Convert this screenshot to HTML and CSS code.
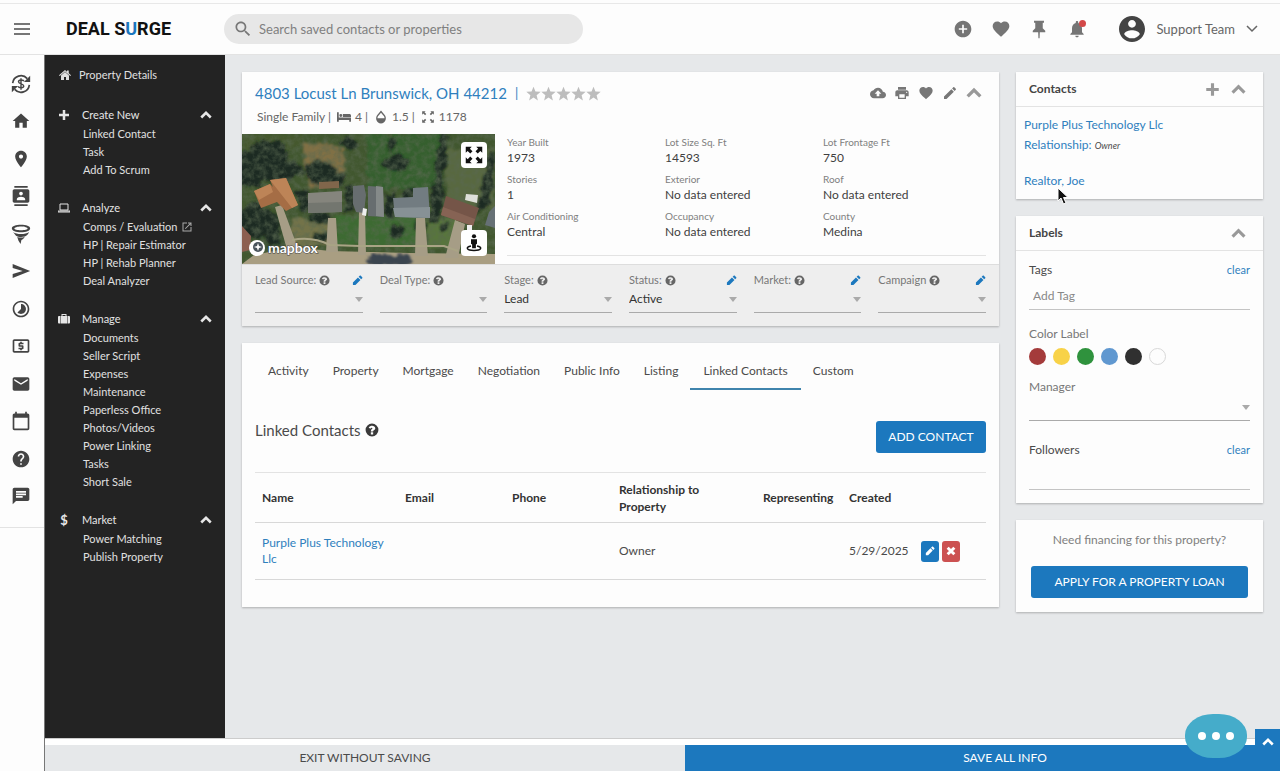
FILE: index.html
```html
<!DOCTYPE html>
<html lang="en">
<head>
    <meta charset="UTF-8">
    <meta name="viewport" content="width=device-width, initial-scale=1.0">
    <title>Deal Surge - Property Details</title>
    <link rel="stylesheet" href="styles.css">
</head>
<body>
    <!-- Shared icons -->
    <svg class="sprite" aria-hidden="true">
        <symbol id="heart" viewBox="0 0 24 24"><path d="M12 21.35l-1.45-1.32C5.4 15.36 2 12.28 2 8.5 2 5.42 4.42 3 7.5 3c1.74 0 3.41.81 4.5 2.09C13.09 3.81 14.76 3 16.5 3 19.58 3 22 5.42 22 8.5c0 3.78-3.4 6.86-8.55 11.54L12 21.35z"/></symbol>
        <symbol id="help" viewBox="0 0 24 24"><path d="M12 1a11 11 0 1 0 0 22 11 11 0 0 0 0-22zm2 18.500h-4v-3.500h4v3.500zm2.800-8.500c-.8 1.100-2.800 1.600-2.800 3.200v.3h-4v-.8c0-2.600 2.800-3 2.800-4.500 0-1.600-2.600-1.500-3.800.5L6.300 7.700C9.500 2.800 17.600 4.200 17.600 9c0 .8-.3 1.500-.8 2z"/></symbol>
        <symbol id="pencil" viewBox="0 0 24 24"><path d="M2 16.500V22h5.500L18.500 11 13 5.500 2 16.500zM22.300 7.200c.8-.8.8-1.700 0-2.500l-3-3c-.8-.8-1.700-.8-2.500 0L14.500 4 20 9.500l2.300-2.300z"/></symbol>
        <symbol id="chevron" viewBox="0 0 24 24"><path d="M2.500 17L12 7.500l9.500 9.500" fill="none" stroke="currentColor" stroke-width="5"/></symbol>
        <symbol id="plus" viewBox="0 0 24 24"><path d="M9.500 2h5v7.500H22v5h-7.500V22h-5v-7.500H2v-5h7.500z"/></symbol>
        <symbol id="star" viewBox="0 0 24 24"><path d="M12 18.300L19 23l-2-8.300 6.500-5.400-8.400-.6L12 1 8.900 8.700.5 9.300 7 14.700 5 23z"/></symbol>
    </svg>

    <header class="topbar">
        <button class="menu-btn" aria-label="Menu">
            <svg viewBox="0 0 16 12"><path d="M0 1h16M0 6h16M0 11h16" stroke="currentColor" stroke-width="1.500"/></svg>
        </button>
        <a class="logo" href="#">DEAL S<span>U</span>RGE</a>
        <label class="search">
            <svg viewBox="0 0 24 24"><path d="M15.500 14h-.79l-.28-.27C15.410 12.590 16 11.110 16 9.500 16 5.910 13.090 3 9.500 3S3 5.910 3 9.500 5.910 16 9.500 16c1.610 0 3.090-.59 4.230-1.570l.27.28v.79l5 4.990L20.490 19l-4.990-5zm-6 0C7.010 14 5 11.990 5 9.500S7.010 5 9.500 5 14 7.010 14 9.500 11.990 14 9.500 14z"/></svg>
            <input type="text" placeholder="Search saved contacts or properties" aria-label="Search">
        </label>
        <div class="top-actions">
            <button aria-label="Add"><svg viewBox="0 0 24 24"><path d="M12 2C6.480 2 2 6.480 2 12s4.480 10 10 10 10-4.480 10-10S17.520 2 12 2zm5 11h-4v4h-2v-4H7v-2h4V7h2v4h4v2z"/></svg></button>
            <button aria-label="Favorites"><svg><use href="#heart"/></svg></button>
            <button aria-label="Pinned"><svg viewBox="0 0 24 24"><path d="M6 2h12v2.500h-1.500V11l3 3v2h-6.500l-.3 7h-1.400l-.3-7H4.500v-2l3-3V4.500H6z"/></svg></button>
            <button aria-label="Notifications"><svg viewBox="0 0 24 24"><path d="M12 22c1.100 0 2-.9 2-2h-4c0 1.100.89 2 2 2zm6-6v-5c0-3.070-1.640-5.640-4.500-6.320V4c0-.83-.67-1.500-1.500-1.500s-1.500.67-1.500 1.500v.68C7.630 5.360 6 7.920 6 11v5l-2 2v1h16v-1l-2-2z"/></svg><span class="dot"></span></button>
        </div>
        <button class="account">
            <svg class="avatar" viewBox="2 2 20 20"><path d="M12 2C6.480 2 2 6.480 2 12s4.480 10 10 10 10-4.480 10-10S17.520 2 12 2zm0 3c1.660 0 3 1.340 3 3s-1.340 3-3 3-3-1.340-3-3 1.340-3 3-3zm0 14.200c-2.500 0-4.710-1.280-6-3.220.03-1.990 4-3.080 6-3.080 1.990 0 5.970 1.090 6 3.080-1.290 1.940-3.500 3.220-6 3.220z"/></svg>
            Support Team
            <svg class="caret" viewBox="0 0 12 12"><path d="M1 3l5 5 5-5" fill="none" stroke="currentColor" stroke-width="1.500"/></svg>
        </button>
    </header>

    <div class="shell">
        <nav class="rail">
            <ul>
                <li><a href="#" aria-label="Deals"><svg viewBox="0 0 24 24"><path d="M2 11A10 10 0 0 1 19.500 5.500M22 13A10 10 0 0 1 4.500 18.500" fill="none" stroke="currentColor" stroke-width="2"/><path d="M23 2v7.500h-7.500zM1 22v-7.500h7.500z"/><path d="M15.500 8.500c-1-1.600-6.500-2-6.500.8 0 3 6.300 2 6.300 5 0 2.900-5.800 2.700-6.800.6M12 5v14" fill="none" stroke="currentColor" stroke-width="1.700"/></svg></a></li>
                <li><a href="#" aria-label="Home"><svg viewBox="0 0 24 24"><path d="M10 20v-6h4v6h5v-8h3L12 3 2 12h3v8z"/></svg></a></li>
                <li><a href="#" aria-label="Map"><svg viewBox="0 0 24 24"><path d="M12 2C8.130 2 5 5.130 5 9c0 5.250 7 13 7 13s7-7.750 7-13c0-3.870-3.130-7-7-7zm0 9.500c-1.380 0-2.500-1.120-2.500-2.500s1.120-2.500 2.500-2.500 2.500 1.120 2.500 2.500-1.120 2.500-2.500 2.500z"/></svg></a></li>
                <li><a href="#" aria-label="Contacts"><svg viewBox="0 0 24 24"><path d="M20 0H4v2h16V0zM4 24h16v-2H4v2zM20 4H4c-1.100 0-2 .9-2 2v12c0 1.100.9 2 2 2h16c1.100 0 2-.9 2-2V6c0-1.100-.9-2-2-2zm-8 2.750c1.240 0 2.250 1.010 2.250 2.250s-1.010 2.250-2.250 2.250S9.750 10.240 9.750 9 10.760 6.750 12 6.750zM17 17H7v-1.500c0-1.670 3.330-2.500 5-2.500s5 .83 5 2.500V17z"/></svg></a></li>
                <li><a href="#" aria-label="Funnel"><svg viewBox="0 0 24 24"><path d="M12 1c6 0 11 1.600 11 4.300S18 10 12 10 1 8 1 5.300 6 1 12 1zm0 2C7.500 3 4 4.200 4 5.400s3.500 2.100 8 2.100 8-.9 8-2.100S16.500 3 12 3z" fill-rule="evenodd"/><path d="M2.500 9.500c4 3.200 15 3.200 19 0-.5 2.500-2.500 4.500-5 5.500-4 1-8.500.5-10.500-1zM7.500 15.500c3 1.300 6.500 1 9-.3-.7 1.800-2.500 3.300-4 4l-1 4.800-2.500-4z"/></svg></a></li>
                <li><a href="#" aria-label="Campaigns"><svg viewBox="0 0 24 24"><path d="M2.010 20.500L23 12 2.010 3.500 2 8.500l12 3.500-12 3.500z"/></svg></a></li>
                <li><a href="#" aria-label="Timeline"><svg viewBox="0 0 24 24"><path d="M16.240 7.760C15.070 6.590 13.540 6 12 6v6l-4.240 4.240c2.340 2.340 6.140 2.340 8.490 0 2.340-2.340 2.340-6.140-.01-8.480zM12 2C6.480 2 2 6.480 2 12s4.480 10 10 10 10-4.480 10-10S17.520 2 12 2zm0 18c-4.420 0-8-3.580-8-8s3.580-8 8-8 8 3.580 8 8-3.580 8-8 8z"/></svg></a></li>
                <li><a href="#" aria-label="Funding"><svg viewBox="0 0 24 24"><path d="M11 17h2v-1h1c.55 0 1-.45 1-1v-3c0-.55-.45-1-1-1h-3v-1h4V8h-2V7h-2v1h-1c-.55 0-1 .45-1 1v3c0 .55.45 1 1 1h3v1H9v2h2v1zm9-13H4c-1.110 0-1.990.89-1.990 2L2 18c0 1.110.89 2 2 2h16c1.110 0 2-.89 2-2V6c0-1.110-.89-2-2-2zm0 14H4V6h16v12z"/></svg></a></li>
                <li><a href="#" aria-label="Mail"><svg viewBox="0 0 24 24"><path d="M20 4H4c-1.100 0-1.990.9-1.990 2L2 18c0 1.100.9 2 2 2h16c1.100 0 2-.9 2-2V6c0-1.100-.9-2-2-2zm0 4l-8 5-8-5V6l8 5 8-5v2z"/></svg></a></li>
                <li><a href="#" aria-label="Calendar"><svg viewBox="0 0 24 24"><path d="M20 3h-1V1h-2v2H7V1H5v2H4c-1.100 0-2 .9-2 2v16c0 1.100.9 2 2 2h16c1.100 0 2-.9 2-2V5c0-1.100-.9-2-2-2zm0 18H4V8h16v13z"/></svg></a></li>
                <li><a href="#" aria-label="Help"><svg viewBox="0 0 24 24"><path d="M12 2C6.480 2 2 6.480 2 12s4.480 10 10 10 10-4.480 10-10S17.520 2 12 2zm1 17h-2v-2h2v2zm2.070-7.750l-.9.92C13.450 12.900 13 13.500 13 15h-2v-.5c0-1.100.45-2.100 1.170-2.830l1.240-1.260c.37-.36.59-.86.59-1.410 0-1.100-.9-2-2-2s-2 .9-2 2H8c0-2.210 1.790-4 4-4s4 1.790 4 4c0 .88-.36 1.680-.93 2.250z"/></svg></a></li>
                <li><a href="#" aria-label="Chat"><svg viewBox="0 0 24 24"><path d="M20 2H4c-1.100 0-1.990.9-1.990 2L2 22l4-4h14c1.100 0 2-.9 2-2V4c0-1.100-.9-2-2-2zM6 9h12v2H6V9zm8 5H6v-2h8v2zm4-6H6V6h12v2z"/></svg></a></li>
            </ul>
        </nav>

        <div class="workspace">
            <div class="panes">
                <nav class="sidebar">
                    <a class="side-title" href="#"><svg viewBox="0 0 24 24"><path d="M12 6l8 7v9h-6v-6h-4v6H4v-9zM12 2l4 3.500V3h3.500v5.500L24 12.500l-1.500 1.500L12 5 1.500 14 0 12.500z"/></svg>Property Details</a>

                    <section>
                        <button class="side-head"><svg><use href="#plus"/></svg>Create New<svg class="fold"><use href="#chevron"/></svg></button>
                        <a href="#">Linked Contact</a>
                        <a href="#">Task</a>
                        <a href="#">Add To Scrum</a>
                    </section>
                    <section>
                        <button class="side-head"><svg viewBox="0 0 24 24"><path d="M4 4h16v12H4zM0 18h24v2H0z" fill="none" stroke="currentColor" stroke-width="2"/></svg>Analyze<svg class="fold"><use href="#chevron"/></svg></button>
                        <a href="#">Comps / Evaluation <svg class="external" viewBox="0 0 24 24"><path d="M19 19H5V5h7V3H3v18h18v-9h-2v7zM14 3v2h3.590l-9.830 9.830 1.410 1.410L19 6.410V10h2V3h-7z"/></svg></a>
                        <a href="#">HP | Repair Estimator</a>
                        <a href="#">HP | Rehab Planner</a>
                        <a href="#">Deal Analyzer</a>
                    </section>
                    <section>
                        <button class="side-head"><svg viewBox="0 0 24 24"><path d="M7 6V2h10v4h1.500v15h-13V6zm2 0h6V4H9zM0 8c0-1 1-2 2-2h2.500v15H2c-1 0-2-1-2-2zM24 8c0-1-1-2-2-2h-2.500v15H22c1 0 2-1 2-2z" fill-rule="evenodd"/></svg>Manage<svg class="fold"><use href="#chevron"/></svg></button>
                        <a href="#">Documents</a>
                        <a href="#">Seller Script</a>
                        <a href="#">Expenses</a>
                        <a href="#">Maintenance</a>
                        <a href="#">Paperless Office</a>
                        <a href="#">Photos/Videos</a>
                        <a href="#">Power Linking</a>
                        <a href="#">Tasks</a>
                        <a href="#">Short Sale</a>
                    </section>
                    <section>
                        <button class="side-head"><b>$</b>Market<svg class="fold"><use href="#chevron"/></svg></button>
                        <a href="#">Power Matching</a>
                        <a href="#">Publish Property</a>
                    </section>
                </nav>

                <main class="content">
                    <div class="primary">
                        <article class="card">
                            <div class="property-head">
                                <h1>
                                    <a href="#">4803 Locust Ln Brunswick, OH 44212</a>
                                    <span class="divider">|</span>
                                    <span class="stars"><svg><use href="#star"/></svg><svg><use href="#star"/></svg><svg><use href="#star"/></svg><svg><use href="#star"/></svg><svg><use href="#star"/></svg></span>
                                </h1>
                                <div class="property-tools">
                                    <button aria-label="Upload"><svg viewBox="0 0 24 24"><path d="M19.350 10.040C18.670 6.590 15.640 4 12 4 9.110 4 6.600 5.640 5.350 8.040 2.340 8.360 0 10.910 0 14c0 3.310 2.690 6 6 6h13c2.760 0 5-2.240 5-5 0-2.640-2.050-4.780-4.650-4.960zM14 13v4h-4v-4H7l5-5 5 5h-3z"/></svg></button>
                                    <button aria-label="Print"><svg viewBox="0 0 24 24"><path d="M19 8H5c-1.660 0-3 1.340-3 3v6h4v4h12v-4h4v-6c0-1.660-1.340-3-3-3zm-3 11H8v-5h8v5zm3-7c-.55 0-1-.45-1-1s.45-1 1-1 1 .45 1 1-.45 1-1 1zm-1-9H6v4h12V3z"/></svg></button>
                                    <button aria-label="Favorite"><svg><use href="#heart"/></svg></button>
                                    <button aria-label="Edit"><svg viewBox="0 0 24 24"><path d="M3 17.250V21h3.750L17.810 9.940l-3.750-3.750L3 17.250zM20.710 7.040c.39-.39.39-1.020 0-1.410l-2.340-2.340c-.39-.39-1.020-.39-1.410 0l-1.830 1.830 3.750 3.750 1.830-1.830z"/></svg></button>
                                    <button class="collapse" aria-label="Collapse"><svg><use href="#chevron"/></svg></button>
                                </div>
                            </div>
                            <p class="property-meta">
                                <span>Single Family |</span>
                                <span><svg viewBox="0 0 24 24"><path d="M0 4h3v9h21v7h-3v-3H3v3H0zM6.500 7a2.500 2.500 0 1 1 0 5 2.500 2.500 0 0 1 0-5zM10 7h11c2 0 3 1 3 3v2H10z"/></svg>4 |</span>
                                <span><svg viewBox="0 0 24 24"><path d="M12 1l6 7c5 5.500 1.500 15-6 15S1 13.500 6 8zM12 4.500L8 9.500c-1.500 1.500-2 2.500-2 4.500h12c0-2-.5-3-2-4.500z" fill-rule="evenodd"/></svg>1.5 |</span>
                                <span><svg viewBox="0 0 24 24"><path d="M2 2h6L6 4l3 3-2 2-3-3-2 2zM22 2v6l-2-2-3 3-2-2 3-3-2-2zM2 22v-6l2 2 3-3 2 2-3 3 2 2zM22 22h-6l2-2-3-3 2-2 3 3 2-2z"/></svg>1178</span>
                            </p>

                            <div class="overview">
                                <div class="map">
                                    <svg viewBox="0 0 253 130" preserveAspectRatio="xMidYMid slice" aria-label="Satellite view">
                                        <defs>
                                            <filter id="rough" x="-5%" y="-5%" width="110%" height="110%">
                                                <feTurbulence type="fractalNoise" baseFrequency=".12" numOctaves="3" seed="4"/>
                                                <feDisplacementMap in="SourceGraphic" scale="10" xChannelSelector="R" yChannelSelector="G"/>
                                                <feGaussianBlur stdDeviation=".8"/>
                                            </filter>
                                            <filter id="grain">
                                                <feTurbulence type="fractalNoise" baseFrequency=".16" numOctaves="4" seed="8"/>
                                                <feColorMatrix values="0 0 0 0 .1  0 0 0 0 .14  0 0 0 0 .08  1.4 0 0 0 -.5"/>
                                            </filter>
                                        </defs>
                                        <rect width="253" height="130" fill="#41572f"/>
                                        <g filter="url(#rough)">
                                            <path d="M125 0h75v55h-75z" fill="#355f2d"/>
                                            <path d="M203 15h50v60h-48z" fill="#586840"/>
                                            <path d="M60 10q25-6 42 8v30l-35 6z" fill="#806f45"/>
                                            <path d="M0 0h62v12L30 22 0 20z" fill="#44582f"/>
                                            <path d="M94 82h82v30H94z" fill="#3e6b31"/>
                                            <path d="M50 84h37v28H50z" fill="#73734a"/>
                                            <path d="M186 84h30v30h-30z" fill="#58753c"/>
                                            <path d="M0 75l36 5 12 32-30 5z" fill="#38502f"/>
                                        </g>
                                        <g filter="url(#rough)" fill="#1c2a23">
                                            <ellipse cx="26" cy="20" rx="19" ry="14"/>
                                            <ellipse cx="8" cy="36" rx="16" ry="18"/>
                                            <ellipse cx="35" cy="36" rx="25" ry="11"/>
                                            <ellipse cx="78" cy="38" rx="15" ry="12"/>
                                            <ellipse cx="92" cy="45" rx="12" ry="9"/>
                                            <ellipse cx="107" cy="9" rx="8" ry="6"/>
                                            <ellipse cx="154" cy="29" rx="13" ry="8"/>
                                            <ellipse cx="150" cy="9" rx="6" ry="7"/>
                                            <ellipse cx="12" cy="88" rx="18" ry="18"/>
                                            <ellipse cx="30" cy="95" rx="8" ry="16"/>
                                            <ellipse cx="80" cy="103" rx="10" ry="5"/>
                                            <ellipse cx="78" cy="83" rx="10" ry="6"/>
                                            <ellipse cx="155" cy="97" rx="8" ry="6"/>
                                            <ellipse cx="178" cy="92" rx="6" ry="7"/>
                                            <ellipse cx="203" cy="94" rx="5" ry="5"/>
                                            <path d="M199 0h7l-7 58h-9zM247 18h7l-7 52-12 12 5-30zM54 56h13v21H58zM102 52h10v27h-8zM143 60h10v24h-10zM163 52h9v12h-9zM190 58h11l-4 30h-9z"/>
                                        </g>
                                        <rect width="253" height="130" filter="url(#grain)"/>
                                        <path d="M0 130l12-9 40-8 36 4 80 2 85 1v10z" fill="#a99e82"/>
                                        <path d="M33 73l7-2 14 38 8 8-16 2zM86 84h8l2 34H84zM117 77h6l1 44h-8zM174 84h9l3 38h-13zM213 86l10 4-7 34h-13z" fill="#a69d86"/>
                                        <path d="M50 106q20-4 38 5l30 1h84l14 5" fill="none" stroke="#a9a485" stroke-width="2"/>
                                        <path d="M12 57l16-7 3 3-3-7 16-2 12 27-12 6-9-9-16 6z" fill="#a56d45"/>
                                        <path d="M28 46l16-2 12 27-6 3zM12 57l16-7 3 8-14 8z" fill="#bd8457"/>
                                        <path d="M66 59l34-2v21l-34 1z" fill="#85857d"/><path d="M66 69l34-1v10l-34 1z" fill="#73766f"/>
                                        <path d="M77 48l20-1v7l-20 1z" fill="#80664b"/>
                                        <path d="M111 52l11-1 2 10-2 18-8-1-3-8zM126 52l15 1 1 30-16-1z" fill="#676d6f"/><path d="M134 52l7 1 1 30-8-1z" fill="#858a89"/>
                                        <path d="M151 64l20-1V54l15-1 2 31-35-1z" fill="#727c81"/><path d="M151 74l37-1v11l-35-1z" fill="#879195"/>
                                        <path d="M204 62l33 12-6 18-32-11z" fill="#755548"/><path d="M201 73l32 12-2 7-32-11z" fill="#866354"/>
                                        <path d="M224 60l12 1-1 8-12-3z" fill="#dedfd9"/>
                                        <path d="M0 92l9 10-1 14-8 2z" fill="#8c5f50"/>
                                        <path d="M247 78l6-6v22l-10-3z" fill="#667075"/>
                                        <path d="M121 74l4 1-1 7-4-1zM225 91h5v5h-5z" fill="#eee"/>
                                        <ellipse cx="147" cy="126" rx="23" ry="6" fill="#3b4550" filter="url(#rough)"/>
                                        <circle cx="15" cy="114" r="8" fill="#fff"/>
                                        <circle cx="16" cy="113" r="5" fill="#48525a"/>
                                        <path d="M16 109l1 3 3 1-3 1-1 3-1-3-3-1 3-1z" fill="#fff"/>
                                        <text x="26" y="119">mapbox</text>
                                    </svg>
                                    <button class="map-btn expand" aria-label="Expand map"><svg viewBox="0 0 24 24"><path d="M1 1h8L6.500 3.500 10 7l-3 3-3.500-3.500L1 9zM23 1v8l-2.500-2.500L17 10l-3-3 3.500-3.500L15 1zM1 23v-8l2.500 2.500L7 14l3 3-3.500 3.500L9 23zM23 23h-8l2.500-2.500L14 17l3-3 3.500 3.500L23 15z"/></svg></button>
                                    <button class="map-btn street" aria-label="Street view"><svg viewBox="0 0 24 24"><circle cx="12" cy="3" r="2.800"/><path d="M8 7h8v6l-1.500 1v5h-5v-5L8 13z"/><path d="M8 16c-8 1.500-6 6 4 6s12-4.500 4-6" fill="none" stroke="currentColor" stroke-width="2"/></svg></button>
                                </div>
                                <dl class="facts">
                                    <div><dt>Year Built</dt><dd>1973</dd></div>
                                    <div><dt>Lot Size Sq. Ft</dt><dd>14593</dd></div>
                                    <div><dt>Lot Frontage Ft</dt><dd>750</dd></div>
                                    <div><dt>Stories</dt><dd>1</dd></div>
                                    <div><dt>Exterior</dt><dd>No data entered</dd></div>
                                    <div><dt>Roof</dt><dd>No data entered</dd></div>
                                    <div><dt>Air Conditioning</dt><dd>Central</dd></div>
                                    <div><dt>Occupancy</dt><dd>No data entered</dd></div>
                                    <div><dt>County</dt><dd>Medina</dd></div>
                                </dl>
                            </div>

                            <div class="status-bar">
                                <div class="field">
                                    <div class="field-head"><label for="lead-source">Lead Source:</label><svg><use href="#help"/></svg><button aria-label="Edit lead source"><svg><use href="#pencil"/></svg></button></div>
                                    <div class="select"><select id="lead-source"><option></option></select></div>
                                </div>
                                <div class="field">
                                    <div class="field-head"><label for="deal-type">Deal Type:</label><svg><use href="#help"/></svg></div>
                                    <div class="select"><select id="deal-type"><option></option></select></div>
                                </div>
                                <div class="field">
                                    <div class="field-head"><label for="stage">Stage:</label><svg><use href="#help"/></svg></div>
                                    <div class="select"><select id="stage"><option>Lead</option></select></div>
                                </div>
                                <div class="field">
                                    <div class="field-head"><label for="status">Status:</label><svg><use href="#help"/></svg><button aria-label="Edit status"><svg><use href="#pencil"/></svg></button></div>
                                    <div class="select"><select id="status"><option>Active</option></select></div>
                                </div>
                                <div class="field">
                                    <div class="field-head"><label for="market">Market:</label><svg><use href="#help"/></svg><button aria-label="Edit market"><svg><use href="#pencil"/></svg></button></div>
                                    <div class="select"><select id="market"><option></option></select></div>
                                </div>
                                <div class="field">
                                    <div class="field-head"><label for="campaign">Campaign</label><svg><use href="#help"/></svg><button aria-label="Edit campaign"><svg><use href="#pencil"/></svg></button></div>
                                    <div class="select"><select id="campaign"><option></option></select></div>
                                </div>
                            </div>
                        </article>

                        <article class="card details">
                            <nav class="tabs">
                                <a href="#">Activity</a>
                                <a href="#">Property</a>
                                <a href="#">Mortgage</a>
                                <a href="#">Negotiation</a>
                                <a href="#">Public Info</a>
                                <a href="#">Listing</a>
                                <a href="#" class="active">Linked Contacts</a>
                                <a href="#">Custom</a>
                            </nav>
                            <div class="details-head">
                                <h2>Linked Contacts <svg><use href="#help"/></svg></h2>
                                <button class="btn">ADD CONTACT</button>
                            </div>
                            <table>
                                <colgroup>
                                    <col>
                                    <col class="col-medium">
                                    <col class="col-medium">
                                    <col class="col-wide">
                                    <col class="col-small">
                                    <col class="col-date">
                                    <col class="col-date">
                                </colgroup>
                                <thead>
                                    <tr>
                                        <th>Name</th>
                                        <th>Email</th>
                                        <th>Phone</th>
                                        <th>Relationship to<br>Property</th>
                                        <th>Representing</th>
                                        <th>Created</th>
                                        <th></th>
                                    </tr>
                                </thead>
                                <tbody>
                                    <tr>
                                        <td><a href="#">Purple Plus Technology Llc</a></td>
                                        <td></td>
                                        <td></td>
                                        <td>Owner</td>
                                        <td></td>
                                        <td>5/29/2025</td>
                                        <td>
                                            <div class="row-actions">
                                                <button class="edit" aria-label="Edit"><svg><use href="#pencil"/></svg></button>
                                                <button class="remove" aria-label="Remove"><svg viewBox="0 0 24 24"><path d="M4 4l16 16M20 4L4 20" stroke="currentColor" stroke-width="7"/></svg></button>
                                            </div>
                                        </td>
                                    </tr>
                                </tbody>
                            </table>
                        </article>
                    </div>

                    <aside class="secondary">
                        <section class="card contacts">
                            <div class="card-head">
                                <h3>Contacts</h3>
                                <button aria-label="Add contact"><svg><use href="#plus"/></svg></button>
                                <button aria-label="Collapse"><svg><use href="#chevron"/></svg></button>
                            </div>
                            <ul>
                                <li><a href="#">Purple Plus Technology Llc</a></li>
                                <li><a href="#">Relationship:</a> <em>Owner</em></li>
                                <li><a href="#">Realtor, Joe</a></li>
                            </ul>
                            <svg class="pointer" viewBox="0 0 12 18"><path d="M1 1v13l3-3 2.500 6 2.500-1-2.500-5.500H11z" fill="#111" stroke="#fff"/></svg>
                        </section>

                        <section class="card">
                            <div class="card-head">
                                <h3>Labels</h3>
                                <button aria-label="Collapse"><svg><use href="#chevron"/></svg></button>
                            </div>
                            <div class="labels">
                                <div class="label-row"><label for="tags">Tags</label><button>clear</button></div>
                                <input id="tags" class="line-input" type="text" placeholder="Add Tag">
                                <fieldset>
                                    <legend>Color Label</legend>
                                    <div class="swatches">
                                        <input class="red" type="radio" name="color" aria-label="Red">
                                        <input class="yellow" type="radio" name="color" aria-label="Yellow">
                                        <input class="green" type="radio" name="color" aria-label="Green">
                                        <input class="blue" type="radio" name="color" aria-label="Blue">
                                        <input class="black" type="radio" name="color" aria-label="Black">
                                        <input class="white" type="radio" name="color" aria-label="White">
                                    </div>
                                </fieldset>
                                <label class="muted" for="manager">Manager</label>
                                <div class="select"><select id="manager"><option></option></select></div>
                                <div class="label-row followers"><label for="followers">Followers</label><button>clear</button></div>
                                <input id="followers" class="line-input" type="text">
                            </div>
                        </section>

                        <section class="card financing">
                            <p>Need financing for this property?</p>
                            <button class="btn">APPLY FOR A PROPERTY LOAN</button>
                        </section>
                    </aside>
                </main>
            </div>

            <footer class="savebar">
                <button class="exit">EXIT WITHOUT SAVING</button>
                <button class="save">SAVE ALL INFO</button>
            </footer>
        </div>
    </div>

    <button class="to-top" aria-label="Back to top"><svg><use href="#chevron"/></svg></button>
    <button class="chat" aria-label="Open chat"><span></span><span></span><span></span></button>
</body>
</html>
```
FILE: styles.css
```css
* {
    box-sizing: border-box;
}
body {
    margin: 0;
    height: 100vh;
    display: flex;
    flex-direction: column;
    background-color: #fdfdfd;
    font-family: Lato, "Open Sans", sans-serif;
    font-size: 13px;
    line-height: 18px;
    color: #4a4a4a;
}
h1, h2, h3, p, ul, dl, dd, fieldset {
    margin: 0;
    padding: 0;
    font-weight: normal;
}
ul {
    list-style: none;
}
a {
    color: #2f80bd;
    text-decoration: none;
}
button, input, select {
    font: inherit;
    color: inherit;
    background: none;
    border: none;
    margin: 0;
    padding: 0;
}
button {
    cursor: pointer;
}
svg {
    display: block;
    fill: currentColor;
    flex: none;
}
.sprite {
    position: absolute;
    width: 0;
    height: 0;
}

/* Top bar */
.topbar {
    flex: none;
    display: flex;
    align-items: center;
    height: 52px;
    margin-top: 3px;
    padding: 0 22px 0 14px;
    border-top: 1px solid #e8e8e8;
    border-bottom: 1px solid #e3e3e3;
}
.menu-btn svg {
    width: 16px;
    height: 12px;
}
.logo {
    width: 158px;
    padding-left: 36px;
    font-family: Roboto, "Liberation Sans", sans-serif;
    font-size: 18px;
    font-weight: bold;
    color: #111;
    white-space: nowrap;
}
.logo span {
    color: #1c78be;
}
.search {
    display: flex;
    align-items: center;
    gap: 6px;
    flex: 0 1 359px;
    margin-left: 36px;
    height: 30px;
    padding: 0 9px;
    border-radius: 15px;
    background-color: #e7e7e7;
    color: #777;
}
.search svg {
    width: 20px;
    height: 20px;
}
.search input {
    flex: 1;
    outline: none;
}
.search input::placeholder {
    color: #808080;
    opacity: 1;
}
.top-actions {
    display: flex;
    gap: 18px;
    margin-left: auto;
    color: #757575;
}
.top-actions button {
    position: relative;
}
.top-actions svg {
    width: 20px;
    height: 20px;
}
.dot {
    position: absolute;
    top: 1px;
    right: 1px;
    width: 7px;
    height: 7px;
    border-radius: 50%;
    background-color: #d34848;
}
.account {
    display: flex;
    align-items: center;
    gap: 11px;
    margin-left: 32px;
    color: #666;
}
.avatar {
    width: 26px;
    height: 26px;
    color: #444;
}
.caret {
    width: 12px;
    height: 12px;
}

/* Icon rail */
.shell {
    flex: 1;
    display: flex;
    min-height: 0;
}
.rail {
    flex: none;
    width: 45px;
    border-right: 1px solid #777;
    color: #444;
}
.rail ul {
    display: grid;
    grid-auto-rows: 1fr;
    height: 473px;
    padding: 10px 2px 12px 0;
    border-bottom: 1px solid #e3e3e3;
}
.rail a {
    display: flex;
    align-items: center;
    justify-content: center;
    height: 100%;
    color: inherit;
}
.rail svg {
    width: 20px;
    height: 20px;
}
.workspace {
    flex: 1;
    display: flex;
    flex-direction: column;
    min-width: 0;
    overflow: hidden;
}
.panes {
    flex: 1;
    display: flex;
    min-height: 0;
}

/* Dark sidebar */
.sidebar {
    flex: none;
    width: 180px;
    padding: 10px 13px 0;
    background-color: #232323;
    font-size: 11px;
    color: #e6e6e6;
}
.sidebar a {
    display: flex;
    align-items: center;
    gap: 4px;
    padding-left: 25px;
    color: #e0e0e0;
}
.sidebar .side-title {
    gap: 8px;
    height: 20px;
    padding: 0 0 0 1px;
    margin-bottom: 20px;
}
.sidebar svg {
    width: 12px;
    height: 12px;
}
.sidebar section {
    margin-bottom: 19px;
}
.side-head {
    display: flex;
    align-items: center;
    gap: 12px;
    width: 100%;
    height: 20px;
}
.side-head b {
    width: 12px;
    font-size: 13px;
}
.side-head .fold {
    margin-left: auto;
}
.sidebar .external {
    color: #aaa;
}

/* Cards */
.content {
    flex: 1;
    display: flex;
    align-items: flex-start;
    gap: 17px;
    min-width: 0;
    padding: 17px;
    background-color: #e6e8ea;
    overflow: hidden;
}
.primary {
    flex: 1;
    min-width: 0;
}
.secondary {
    flex: none;
    width: 247px;
}
.card {
    margin-bottom: 17px;
    background-color: #fdfdfd;
    box-shadow: 0 1px 2px rgba(0, 0, 0, 0.25);
}
.btn {
    height: 32px;
    border-radius: 3px;
    background-color: #1c78be;
    color: #fff;
}

/* Property summary */
.property-head {
    display: flex;
    align-items: center;
    justify-content: space-between;
    height: 34px;
    padding: 8px 17px 0 13px;
}
.property-head h1 {
    display: flex;
    align-items: center;
    gap: 8px;
    font-size: 15px;
}
.divider {
    color: #2f80bd;
    font-size: 13px;
}
.stars {
    display: flex;
    color: #bdbdbd;
}
.stars svg {
    width: 15px;
    height: 15px;
}
.property-tools {
    display: flex;
    gap: 8px;
    color: #777;
}
.property-tools svg {
    width: 16px;
    height: 16px;
}
.property-tools .collapse {
    color: #999;
}
.property-meta {
    display: flex;
    gap: 6px;
    height: 28px;
    padding: 2px 15px;
    font-size: 12px;
    color: #666;
}
.property-meta span {
    display: flex;
    align-items: center;
    gap: 4px;
    height: 18px;
}
.property-meta svg {
    width: 14px;
    height: 14px;
}
.overview {
    display: flex;
    gap: 12px;
}
.map {
    position: relative;
    flex: none;
    width: 253px;
    height: 130px;
}
.map > svg {
    width: 100%;
    height: 100%;
}
.map text {
    fill: #fff;
    stroke: #444;
    stroke-width: 1px;
    paint-order: stroke;
    font-size: 14px;
    font-weight: bold;
}
.map-btn {
    position: absolute;
    right: 8px;
    display: grid;
    place-items: center;
    width: 26px;
    height: 26px;
    border-radius: 4px;
    background-color: #fff;
    color: #111;
}
.map-btn svg {
    width: 18px;
    height: 18px;
}
.expand {
    top: 8px;
}
.street {
    bottom: 8px;
}
.facts {
    flex: 1;
    display: grid;
    grid-template-columns: repeat(3, 158px);
    align-content: start;
    gap: 5px 0;
    height: 122px;
    margin-right: 13px;
    border-bottom: 1px solid #e3e3e3;
    line-height: 16px;
}
.facts dt {
    font-size: 10px;
    color: #808080;
}
.facts dd {
    font-size: 12px;
    color: #404040;
}
.status-bar {
    display: grid;
    grid-template-columns: repeat(6, 1fr);
    gap: 17px;
    height: 62px;
    padding: 7px 13px;
    background-color: #eee;
    border-top: 1px solid #ddd;
}
.field-head {
    display: flex;
    align-items: center;
    gap: 3px;
    height: 16px;
    font-size: 11px;
    color: #777;
}
.field-head svg {
    width: 11px;
    height: 11px;
    color: #666;
}
.field-head button {
    margin-left: auto;
}
.field-head button svg {
    color: #1c78be;
}
.select {
    position: relative;
    border-bottom: 1px solid #aaa;
}
.select::after {
    content: "";
    position: absolute;
    right: 0;
    top: 9px;
    border: 4px solid transparent;
    border-top: 5px solid #aaa;
    border-bottom: 0;
    pointer-events: none;
}
.select select {
    display: block;
    appearance: none;
    width: 100%;
    height: 24px;
    padding-bottom: 3px;
    font-size: 12px;
    outline: none;
    color: #333;
}

/* Tabs and contacts table */
.details {
    padding: 9px 13px 27px;
}
.tabs {
    display: flex;
    height: 38px;
    padding-left: 1px;
}
.tabs a {
    padding: 10px 12px 8px;
    font-size: 12px;
    color: #4a4a4a;
}
.tabs .active {
    padding: 10px 13px 8px;
    border-bottom: 2px solid #3f84ad;
}
.details-head {
    display: flex;
    align-items: flex-start;
    justify-content: space-between;
    padding: 31px 0 19px;
}
.details-head h2 {
    display: flex;
    align-items: center;
    gap: 4px;
    font-size: 15px;
}
.details-head h2 svg {
    width: 14px;
    height: 14px;
    color: #3a3a3a;
}
.details-head .btn {
    width: 110px;
    font-size: 12px;
}
table {
    width: 100%;
    table-layout: fixed;
    border-collapse: collapse;
    font-size: 12px;
    line-height: 17px;
}
th, td {
    height: 50px;
    padding: 0 7px;
    text-align: left;
    border-top: 1px solid #e3e3e3;
    border-bottom: 1px solid #d8d8d8;
}
th {
    color: #333;
}
td {
    height: 57px;
    line-height: 16px;
}
.col-medium {
    width: 107px;
}
.col-wide {
    width: 144px;
}
.col-small {
    width: 86px;
}
.col-date {
    width: 72px;
}
.row-actions {
    display: flex;
    gap: 3px;
}
.row-actions button {
    display: grid;
    place-items: center;
    width: 18px;
    height: 21px;
    border-radius: 3px;
    color: #fff;
}
.row-actions svg {
    width: 10px;
    height: 10px;
}
.row-actions .edit {
    background-color: #1c78be;
}
.row-actions .remove {
    background-color: #cc5151;
}

/* Right column */
.card-head {
    display: flex;
    align-items: center;
    gap: 11px;
    height: 35px;
    padding: 0 17px 0 13px;
    border-bottom: 1px solid #e3e3e3;
    color: #999;
}
.card-head h3 {
    margin-right: auto;
    font-size: 12px;
    font-weight: bold;
    color: #444;
}
.card-head svg {
    width: 15px;
    height: 15px;
}
.contacts {
    position: relative;
}
.contacts ul {
    padding: 9px 8px;
    font-size: 12px;
}
.contacts li {
    height: 20px;
}
.contacts li:last-child {
    height: 18px;
    margin-top: 16px;
}
.contacts em {
    font-size: 9px;
}
.pointer {
    position: absolute;
    left: 41px;
    bottom: -6px;
    width: 12px;
    height: 18px;
}
.labels {
    padding: 10px 13px 13px;
    font-size: 12px;
}
.label-row {
    display: flex;
    justify-content: space-between;
}
.label-row button {
    color: #2f80bd;
    font-size: 11px;
}
.line-input {
    display: block;
    width: 100%;
    height: 31px;
    padding: 4px 4px 2px;
    border-bottom: 1px solid #c4c4c4;
    outline: none;
}
.line-input::placeholder {
    color: #888;
    opacity: 1;
}
fieldset {
    border: none;
    margin: 15px 0 13px;
}
legend, .muted {
    display: block;
    padding: 0;
    color: #777;
}
.swatches {
    display: flex;
    gap: 7px;
    margin-top: 5px;
}
.swatches input {
    appearance: none;
    width: 17px;
    height: 17px;
    border-radius: 50%;
}
.red {
    background-color: #a43b3b;
}
.yellow {
    background-color: #f8d248;
}
.green {
    background-color: #2f923d;
}
.blue {
    background-color: #6098d0;
}
.black {
    background-color: #303030;
}
.white {
    border: 1px solid #d8d8d8;
}
.followers {
    margin-top: 20px;
}
.financing {
    padding: 11px 15px 14px;
    text-align: center;
    color: #808080;
    font-size: 12px;
}
.financing .btn {
    width: 100%;
    margin-top: 17px;
}

/* Bottom bar */
.savebar {
    flex: none;
    display: grid;
    grid-template-columns: 1fr 1fr;
    width: 100vw;
    padding-top: 6px;
    background-color: #fff;
    border-top: 1px solid #ccc;
}
.savebar button {
    height: 26px;
    font-size: 12px;
}
.exit {
    background-color: #e6e8ea;
}
.savebar .save {
    background-color: #1c78be;
    color: #fff;
}
.to-top {
    position: fixed;
    right: 0;
    bottom: 16px;
    display: grid;
    place-items: center;
    width: 25px;
    height: 26px;
    background-color: #1c78be;
    color: #fff;
}
.to-top svg {
    width: 12px;
    height: 12px;
}
.chat {
    position: fixed;
    right: 33px;
    bottom: 13px;
    display: flex;
    align-items: center;
    justify-content: center;
    gap: 6px;
    width: 62px;
    height: 44px;
    border-radius: 28px / 21px;
    background-color: #45acca;
}
.chat span {
    width: 8px;
    height: 8px;
    border-radius: 50%;
    background-color: #fff;
}
```
